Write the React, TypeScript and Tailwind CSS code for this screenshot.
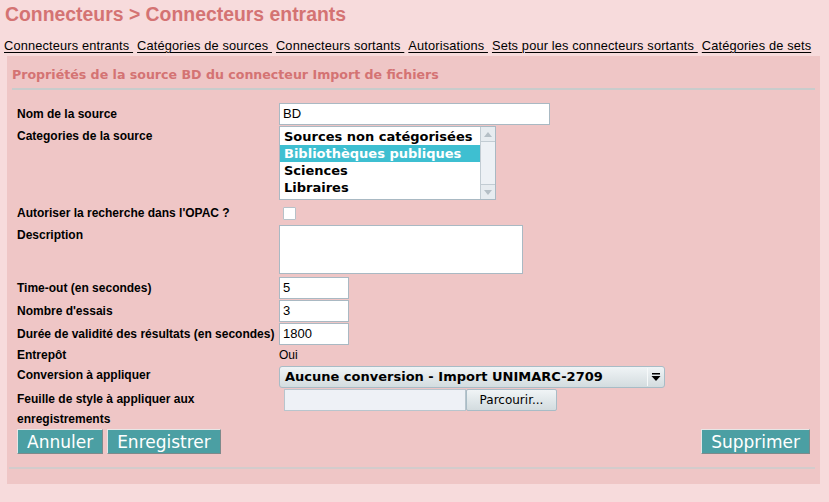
import React from "react";

const label = "font-['Liberation_Sans',Arial,sans-serif] text-[12px] font-bold text-black leading-[14px]";
const inputBox = "h-[22px] bg-white border border-[#a9b9c3] px-[3px] font-['Liberation_Sans',Arial,sans-serif] text-[13px] leading-[20px] text-black";
const btn = "h-[25px] bg-[#4b9fa3] text-white font-['DejaVu_Sans',sans-serif] text-[17px] leading-[22px] px-[9px] border border-t-[#e6e6e6] border-l-[#e6e6e6] border-r-[#7d8a8b] border-b-[#7d8a8b]";

function Tab({ children }: { children: React.ReactNode }) {
  return (
    <span className="underline decoration-1 underline-offset-[2px] whitespace-pre text-black">{children}</span>
  );
}

export default function App() {
  return (
    <div className="w-[829px] h-[502px] bg-[#f7dbdc] overflow-hidden">
      <div className="pl-[5px] pt-[3px] h-[38px] font-['Liberation_Sans',Arial,sans-serif] text-[19.4px] font-bold text-[#d47373] leading-[22px]">
        Connecteurs &gt; Connecteurs entrants
      </div>
      <div className="pl-[4px] h-[18px] flex gap-[4px] font-['Liberation_Sans',Arial,sans-serif] text-[12.8px] tracking-[0.15px] leading-[15px]">
        <Tab>Connecteurs entrants </Tab>
        <Tab>Catégories de sources </Tab>
        <Tab>Connecteurs sortants </Tab>
        <Tab>Autorisations </Tab>
        <Tab>Sets pour les connecteurs sortants </Tab>
        <Tab>Catégories de sets</Tab>
      </div>
      <div className="ml-[7px] w-[813px] h-[428px] bg-[#efc6c6] pt-[11px]">
        <div className="ml-[5px] w-[803px] pb-[5px] border-b-2 border-[#c9cccc] font-['DejaVu_Sans',sans-serif] text-[12.6px] font-bold text-[#d47373] leading-[16px]">
          Propriétés de la source BD du connecteur Import de fichiers
        </div>
        <div className="ml-[10px] mt-[13px] grid grid-cols-[262px_1fr]">
          {/* Nom */}
          <div className={label + " pt-[4px]"}>Nom de la source</div>
          <div className="h-[23px]">
            <div className={inputBox + " w-[271px]"}>BD</div>
          </div>
          {/* Categories */}
          <div className={label + " pt-[3px]"}>Categories de la source</div>
          <div className="h-[75px]">
            <div className="w-[217px] h-[74px] bg-white border border-[#a9b9c3] flex">
              <div className="flex-1 pt-[1px] font-['DejaVu_Sans',sans-serif] text-[13px] font-bold leading-[17px] text-black">
                <div className="pl-[4px] h-[17px]">Sources non catégorisées</div>
                <div className="pl-[4px] h-[17px] bg-[#3ebfd1] text-white">Bibliothèques publiques</div>
                <div className="pl-[4px] h-[17px]">Sciences</div>
                <div className="pl-[4px] h-[17px]">Libraires</div>
              </div>
              <div className="w-[15px] bg-[#edf1f5] border-l border-[#c2ccd3] flex flex-col justify-between">
                <div className="h-[15px] border-b border-[#c2ccd3] bg-[#e7ecf0] flex items-center justify-center">
                  <svg width="8" height="5" viewBox="0 0 8 5"><path d="M0 5 L4 0 L8 5 Z" fill="#b5bfc6" /></svg>
                </div>
                <div className="h-[15px] border-t border-[#c2ccd3] bg-[#e7ecf0] flex items-center justify-center">
                  <svg width="8" height="5" viewBox="0 0 8 5"><path d="M0 0 L4 5 L8 0 Z" fill="#b5bfc6" /></svg>
                </div>
              </div>
            </div>
          </div>
          {/* Autoriser */}
          <div className={label + " pt-[5px]"}>Autoriser la recherche dans l'OPAC ?</div>
          <div className="h-[24px] pt-[6px] pl-[4px]">
            <div className="w-[13px] h-[13px] bg-white border border-[#b7c2c9] rounded-[1px]" />
          </div>
          {/* Description */}
          <div className={label + " pt-[3px]"}>Description</div>
          <div className="h-[52px]">
            <div className="w-[244px] h-[49px] bg-white border border-[#a9b9c3]" />
          </div>
          {/* Time-out */}
          <div className={label + " pt-[4px]"}>Time-out (en secondes)</div>
          <div className="h-[23px]">
            <div className={inputBox + " w-[70px]"}>5</div>
          </div>
          {/* Nombre */}
          <div className={label + " pt-[4px]"}>Nombre d'essais</div>
          <div className="h-[23px]">
            <div className={inputBox + " w-[70px]"}>3</div>
          </div>
          {/* Durée */}
          <div className={label + " pt-[4px]"}>Durée de validité des résultats (en secondes)</div>
          <div className="h-[23px]">
            <div className={inputBox + " w-[70px]"}>1800</div>
          </div>
          {/* Entrepôt */}
          <div className={label + " pt-[2px]"}>Entrepôt</div>
          <div className="h-[20px] pt-[2px] font-['Liberation_Sans',Arial,sans-serif] text-[12px] leading-[14px] text-black">Oui</div>
          {/* Conversion */}
          <div className={label + " pt-[2px]"}>Conversion à appliquer</div>
          <div className="h-[23px]">
            <div className="w-[386px] h-[22px] rounded-[3px] border border-[#a8bcc6] bg-gradient-to-b from-[#f0f4f6] to-[#d3dcdf] flex items-center">
              <div className="flex-1 pl-[5px] font-['DejaVu_Sans',sans-serif] text-[13px] font-bold text-black leading-[16px] whitespace-nowrap">Aucune conversion - Import UNIMARC-2709</div>
              <div className="w-[17px] h-[18px] border-l border-[#f6f9fa] flex items-center justify-center">
                <svg width="10" height="9" viewBox="0 0 10 9">
                  <rect x="1" y="0" width="8" height="1.5" fill="#000" />
                  <path d="M0.5 3 L9.5 3 L5 8 Z" fill="#000" />
                </svg>
              </div>
            </div>
          </div>
          {/* Feuille */}
          <div className={label + " leading-[20px]"}>Feuille de style à appliquer aux<br />enregistrements</div>
          <div className="h-[40px] pl-[5px] flex items-start">
            <div className="w-[182px] h-[22px] bg-[#eef1f6] border border-[#b8c5cd]" />
            <div className="w-[91px] h-[22px] rounded-[2px] border border-[#a8bcc6] bg-gradient-to-b from-[#f0f4f6] to-[#d3dcdf] font-['DejaVu_Sans',sans-serif] text-[12px] text-black leading-[20px] text-center">Parcourir...</div>
          </div>
        </div>
        <div className="ml-[10px] mr-[10px] flex justify-between">
          <div className="flex gap-[4px]">
            <button className={btn}>Annuler</button>
            <button className={btn}>Enregistrer</button>
          </div>
          <button className={btn}>Supprimer</button>
        </div>
        <div className="ml-[2px] w-[806px] mt-[13px] h-[2px] bg-[#d3cccc]" />
      </div>
    </div>
  );
}
